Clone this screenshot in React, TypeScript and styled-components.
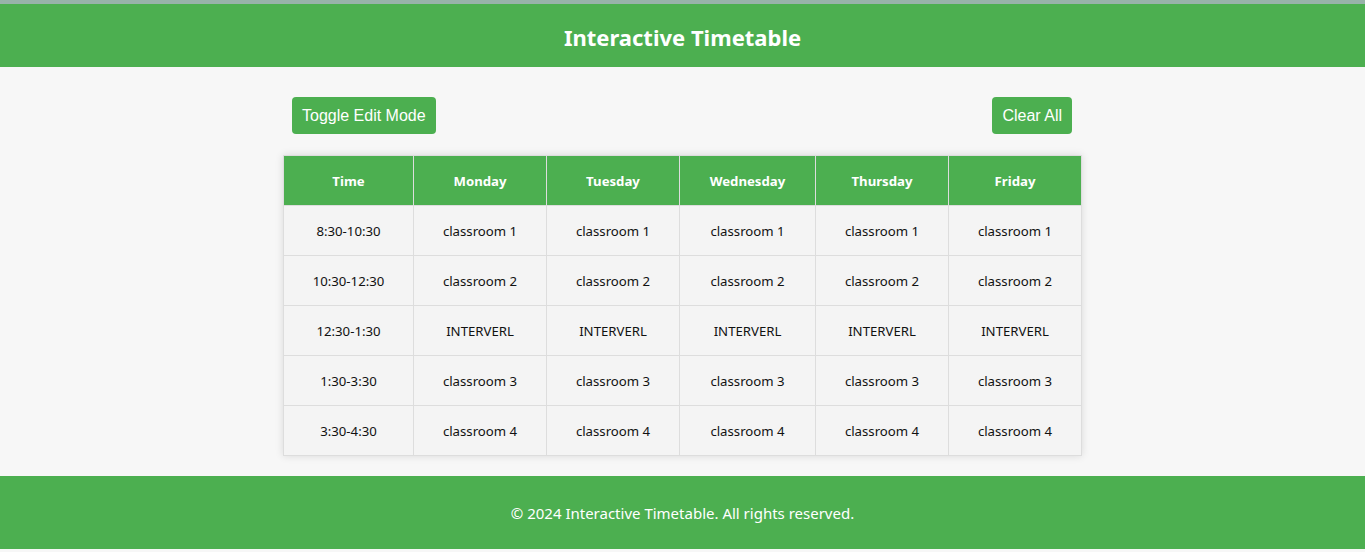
import React from 'react';
import styled, { createGlobalStyle } from 'styled-components';

const GlobalStyle = createGlobalStyle`
  html, body {
    margin: 0;
    padding: 0;
    background: #f7f7f7;
    font-family: "Noto Sans", "Open Sans", sans-serif;
  }
`;

const days = ['Monday', 'Tuesday', 'Wednesday', 'Thursday', 'Friday'];

const rows = [
  { time: '8:30-10:30', value: 'classroom 1' },
  { time: '10:30-12:30', value: 'classroom 2' },
  { time: '12:30-1:30', value: 'INTERVERL' },
  { time: '1:30-3:30', value: 'classroom 3' },
  { time: '3:30-4:30', value: 'classroom 4' },
];

const colWidths = [130, 133, 133, 136, 133, 133];

export default function App() {
  return (
    <Page>
      <GlobalStyle />
      <TopStrip />
      <Header>
        <Title>Interactive Timetable</Title>
      </Header>
      <Main>
        <Toolbar>
          <Button>Toggle Edit Mode</Button>
          <Button>Clear All</Button>
        </Toolbar>
        <Table>
          <colgroup>
            {colWidths.map((w, i) => (
              <col key={i} style={{ width: w }} />
            ))}
          </colgroup>
          <thead>
            <tr>
              <Th>Time</Th>
              {days.map((d) => (
                <Th key={d}>{d}</Th>
              ))}
            </tr>
          </thead>
          <tbody>
            {rows.map((r) => (
              <tr key={r.time}>
                <Td>{r.time}</Td>
                {days.map((d) => (
                  <Td key={d}>{r.value}</Td>
                ))}
              </tr>
            ))}
          </tbody>
        </Table>
      </Main>
      <Footer>© 2024 Interactive Timetable. All rights reserved.</Footer>
    </Page>
  );
}

const Page = styled.div`
  display: flex;
  flex-direction: column;
  min-height: 552px;
`;

const TopStrip = styled.div`
  height: 4px;
  background: #97b3a9;
`;

const Header = styled.header`
  height: 63px;
  background: #4caf50;
  display: flex;
  align-items: center;
  justify-content: center;
  padding-top: 2px;
  box-sizing: border-box;
`;

const Title = styled.h1`
  margin: 0;
  color: #fff;
  font-size: 22px;
  font-weight: 700;
`;

const Main = styled.main`
  width: 799px;
  margin: 0 auto;
  padding: 30px 0 20px;
`;

const Toolbar = styled.div`
  display: flex;
  justify-content: space-between;
  padding: 0 10px 0 9px;
  margin-bottom: 21px;
`;

const Button = styled.button`
  background: #4caf50;
  color: #fff;
  border: none;
  border-radius: 4px;
  padding: 10px 10px;
  height: 37px;
  font-family: "Liberation Sans", Arial, sans-serif;
  font-size: 16px;
  line-height: 17px;
  cursor: pointer;
`;

const Table = styled.table`
  width: 798px;
  table-layout: fixed;
  border-collapse: collapse;
  background: #f4f4f4;
  box-shadow: 0 0 8px rgba(0, 0, 0, 0.12);
`;

const Th = styled.th`
  height: 49px;
  padding: 0;
  background: #4caf50;
  color: #fff;
  font-size: 13.2px;
  font-weight: 700;
  border: 1px solid #dddddd;
  text-align: center;
`;

const Td = styled.td`
  height: 49px;
  padding: 0;
  color: #111;
  font-size: 13.2px;
  border: 1px solid #dddddd;
  text-align: center;
`;

const Footer = styled.footer`
  height: 73px;
  background: #4caf50;
  color: #fff;
  font-size: 15px;
  display: flex;
  align-items: center;
  justify-content: center;
`;
